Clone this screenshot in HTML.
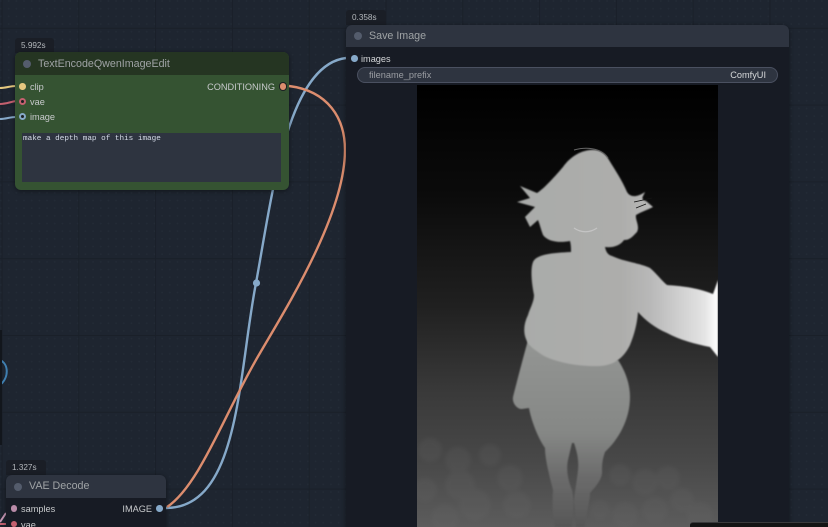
<!DOCTYPE html>
<html>
<head>
<meta charset="utf-8">
<style>
html,body{margin:0;padding:0;width:828px;height:527px;overflow:hidden;background:#1e2530}
body{position:relative;font-family:"Liberation Sans",sans-serif}
#bg{position:absolute;left:0;top:0;width:828px;height:527px;
background-image:
linear-gradient(to right,#1a2029 1px,transparent 1px),
linear-gradient(to bottom,#1a2029 1px,transparent 1px),
radial-gradient(circle at 1px 1px,#232b36 0.7px,transparent 1px);
background-size:76.8px 76.8px,76.8px 76.8px,7.68px 7.68px;
background-position:1.5px 27.8px,1.5px 27.8px,0 0}
.abs{position:absolute;white-space:nowrap}
.node{position:absolute;box-shadow:0 1px 5px rgba(0,0,0,.45)}
.badge{position:absolute;background:#1a1e26;color:#b4b8bc;font-size:8.2px;line-height:15px;height:15px;border-radius:3px 3px 0 0;padding:0 6px;box-sizing:border-box}
.dot{position:absolute;width:6.5px;height:6.5px;border-radius:50%}
.t{position:absolute;white-space:nowrap;font-size:9.2px;line-height:12px;color:#c8cacc}
.title{position:absolute;white-space:nowrap;font-size:10.7px;line-height:14px}
svg{position:absolute;left:0;top:0}
</style>
</head>
<body>
<div id="bg"></div>

<svg width="828" height="527" viewBox="0 0 828 527" fill="none">
<path d="M166,508 C240,508 238,375 256,283 C272,196 287,65 346,58" stroke="#86a9c9" stroke-width="2.4"/>
<circle cx="256.500" cy="283" r="3.600" fill="#86a9c9"/>
<path d="M0,88 C6,88 10,86 16,86" stroke="#e5c87f" stroke-width="2"/>
<path d="M0,104 C6,104 10,102 16,101" stroke="#c4606f" stroke-width="2"/>
<path d="M0,119 C6,119 10,117 16,117" stroke="#86a9c9" stroke-width="2"/>
<path d="M0,360 C9,364 9,378 0,385" stroke="#3f7fb0" stroke-width="2"/>
<path d="M0,522 L6,513" stroke="#c797b5" stroke-width="2"/>
<path d="M0,524 L8,524" stroke="#c4606f" stroke-width="2"/>
</svg>

<div style="position:absolute;left:0;top:330px;width:1.5px;height:115px;background:#12161c"></div>

<!-- Node 1 -->
<div class="badge" style="left:15px;top:38px;width:39px">5.992s</div>
<div class="node" style="left:15px;top:52px;width:274px;height:138px;background:#355332;border-radius:6px;overflow:hidden">
  <div style="position:absolute;left:0;top:0;width:274px;height:23px;background:#253522"></div>
  <div style="position:absolute;left:7px;top:81px;width:259px;height:49px;background:#2e3440"></div>
</div>
<div class="dot" style="left:23px;top:60px;width:8px;height:8px;background:#545c6c"></div>
<div class="title" style="left:38px;top:57px;color:#9fa3a5">TextEncodeQwenImageEdit</div>
<div class="dot" style="left:19px;top:83px;background:#e5c87f"></div>
<div class="dot" style="left:19px;top:98px;background:#1b1f22;border:2px solid #c4606f;width:3px;height:3px"></div>
<div class="dot" style="left:19px;top:113px;background:#1b1f22;border:2px solid #86a9c9;width:3px;height:3px"></div>
<div class="dot" style="left:279.500px;top:83px;background:#dc8d6e;box-shadow:0 0 0 1px #1b1f22"></div>
<div class="t" style="left:30px;top:81px">clip</div>
<div class="t" style="left:30px;top:96px">vae</div>
<div class="t" style="left:30px;top:111px">image</div>
<div class="t" style="right:553px;top:81px">CONDITIONING</div>
<div class="abs" style="left:23px;top:134px;font:7.67px/10px 'Liberation Mono',monospace;color:#d5dbe8">make a depth map of this image</div>

<svg width="828" height="527" viewBox="0 0 828 527" fill="none">
<path d="M289,86 C328,91 345,118 345,150 C345,215 285,310 260,353 C225,412 200,485 167,507" stroke="#dc8d6e" stroke-width="2.4"/>
</svg>

<!-- Node 2 -->
<div class="badge" style="left:346px;top:10px;width:40px">0.358s</div>
<div class="node" style="left:346px;top:25px;width:443px;height:510px;background:#171b24;border-radius:6px;overflow:hidden">
  <div style="position:absolute;left:0;top:0;width:443px;height:22px;background:#2e3440"></div>
</div>
<div class="dot" style="left:354px;top:32px;width:8px;height:8px;background:#545c6c"></div>
<div class="title" style="left:369px;top:29px;color:#9fa3a5">Save Image</div>
<div class="dot" style="left:351px;top:55px;background:#86a9c9"></div>
<div class="t" style="left:361px;top:53px;color:#d6d8da">images</div>
<div style="position:absolute;left:357px;top:67px;width:421px;height:16px;box-sizing:border-box;background:#2e3440;border:1px solid #4a5060;border-radius:8px"></div>
<div class="t" style="left:369px;top:69px;color:#9a9da2">filename_prefix</div>
<div class="t" style="right:62px;top:69px;color:#d6d8da">ComfyUI</div>

<!-- Depth image -->
<svg width="301" height="442" viewBox="417 85 301 442" style="left:417px;top:85px">
<defs>
<linearGradient id="g" x1="0" y1="85" x2="0" y2="527" gradientUnits="userSpaceOnUse">
<stop offset="0" stop-color="#000"/>
<stop offset=".25" stop-color="#0b0b0b"/>
<stop offset=".5" stop-color="#202020"/>
<stop offset=".7" stop-color="#3a3a3a"/>
<stop offset=".85" stop-color="#484848"/>
<stop offset="1" stop-color="#5c5c5c"/>
</linearGradient>
<linearGradient id="b" x1="525" y1="0" x2="718" y2="0" gradientUnits="userSpaceOnUse">
<stop offset="0" stop-color="#a9aba9"/>
<stop offset=".5" stop-color="#adadab"/>
<stop offset=".65" stop-color="#b8b8b8"/>
<stop offset=".8" stop-color="#cfcfcf"/>
<stop offset=".93" stop-color="#e4e4e4"/>
<stop offset="1" stop-color="#ffffff"/>
</linearGradient>
<linearGradient id="hip" x1="0" y1="340" x2="0" y2="527" gradientUnits="userSpaceOnUse">
<stop offset="0" stop-color="#939593"/>
<stop offset=".5" stop-color="#858785"/>
<stop offset=".72" stop-color="#6c6c6c"/>
<stop offset="1" stop-color="#565656"/>
</linearGradient>
<filter id="s"><feGaussianBlur stdDeviation=".7"/></filter>
<filter id="s2"><feGaussianBlur stdDeviation="2"/></filter>
</defs>
<rect x="417" y="85" width="301" height="442" fill="url(#g)"/>
<g fill="#6a6b6b" opacity=".18" filter="url(#s2)">
<circle cx="430" cy="450" r="12"/><circle cx="458" cy="460" r="13"/><circle cx="490" cy="455" r="11"/><circle cx="510" cy="478" r="13"/>
<circle cx="460" cy="485" r="15"/><circle cx="475" cy="505" r="16"/><circle cx="445" cy="518" r="14"/><circle cx="517" cy="505" r="14"/>
<circle cx="620" cy="475" r="11"/><circle cx="645" cy="482" r="13"/><circle cx="668" cy="478" r="12"/><circle cx="682" cy="500" r="12"/>
<circle cx="625" cy="515" r="13"/><circle cx="655" cy="510" r="13"/><circle cx="700" cy="515" r="13"/><circle cx="425" cy="490" r="12"/><circle cx="600" cy="510" r="10"/>
</g>
<!-- hips, legs, forearm and hand as one shape -->
<path filter="url(#s)" fill="url(#hip)" d="M528,340 C522,362 516,385 513,397 C512,403 517,409 522,409 L529,408 C531,420 538,438 545,448 C545,460 550,478 553,490 C552,505 553,520 555,527 L572,527 C574,510 574,500 572,490 C568,480 566,470 568,460 L572,443 L574,443 C577,452 579,460 578,470 C577,480 575,490 574,500 L576,527 L585,527 C587,510 590,500 590,493 C597,485 603,478 602,470 C602,462 603,458 605,452 C618,440 630,420 630,397 C630,385 626,372 618,360 Z"/>
<!-- torso, arm and head -->
<path filter="url(#s)" fill="url(#b)" d="M590,150 C598,149 605,152 609,160 C615,170 622,180 627,192 C630,197 636,198 645,192 C643,197 640,199 646,201 L653,207 C647,210 641,212 636,215 C635,220 640,226 637,232 C632,237 630,240 624,240 C620,246 612,248 605,247 C606,252 608,255 612,256 C625,262 640,263 650,268 C657,274 662,281 667,285 C680,286 695,287 713,294 L718,280 L718,357 L710,347 C695,344 680,340 667,333 C655,328 645,320 638,312 C637,325 634,335 630,345 C625,355 617,365 600,366 C580,367 550,362 538,352 C532,348 529,345 528,343 C523,335 523,325 528,315 C530,308 534,302 534,295 C532,285 530,270 533,262 C536,256 545,253 571,252 C571,248 571,245 570,241 C560,243 548,242 543,235 C541,230 540,225 538,220 L530,227 L525,217 L535,207 L517,202 L530,198 L520,186 L537,193 C545,188 556,175 563,167 C570,157 580,151 590,150 Z"/>
<path d="M574,150 C585,147 600,147 608,158" stroke="#666" stroke-width="1" fill="none"/>
<path d="M652,198 L634,202 M646,204 L636,208" stroke="#151515" stroke-width=".8" fill="none"/>
<path d="M574,228 C581,233 590,233 597,228" stroke="#c4c4c4" stroke-width="1.200" fill="none"/>
</svg>

<!-- Node 3 -->
<div class="badge" style="left:6px;top:460px;width:40px">1.327s</div>
<div class="node" style="left:6px;top:475px;width:160px;height:60px;background:#171b24;border-radius:6px 6px 0 0;overflow:hidden">
  <div style="position:absolute;left:0;top:0;width:160px;height:23px;background:#2e3440"></div>
</div>
<div class="dot" style="left:14px;top:483px;width:8px;height:8px;background:#545c6c"></div>
<div class="title" style="left:29px;top:479px;color:#9fa3a5">VAE Decode</div>
<div class="dot" style="left:10.500px;top:505px;background:#b98ba8"></div>
<div class="dot" style="left:10.500px;top:520.500px;background:#c4606f"></div>
<div class="dot" style="left:156px;top:505px;background:#86a9c9"></div>
<div class="t" style="left:21px;top:503px;color:#c8cacc">samples</div>
<div class="t" style="left:21px;top:519px;color:#c8cacc">vae</div>
<div class="t" style="right:676px;top:503px;color:#c8cacc">IMAGE</div>

<!-- Bottom right panel -->
<div style="position:absolute;left:690px;top:522px;width:138px;height:5px;background:#141414;border-top:1px solid #3a3a3c;box-sizing:border-box;border-radius:3px 0 0 0"></div>
</body>
</html>
